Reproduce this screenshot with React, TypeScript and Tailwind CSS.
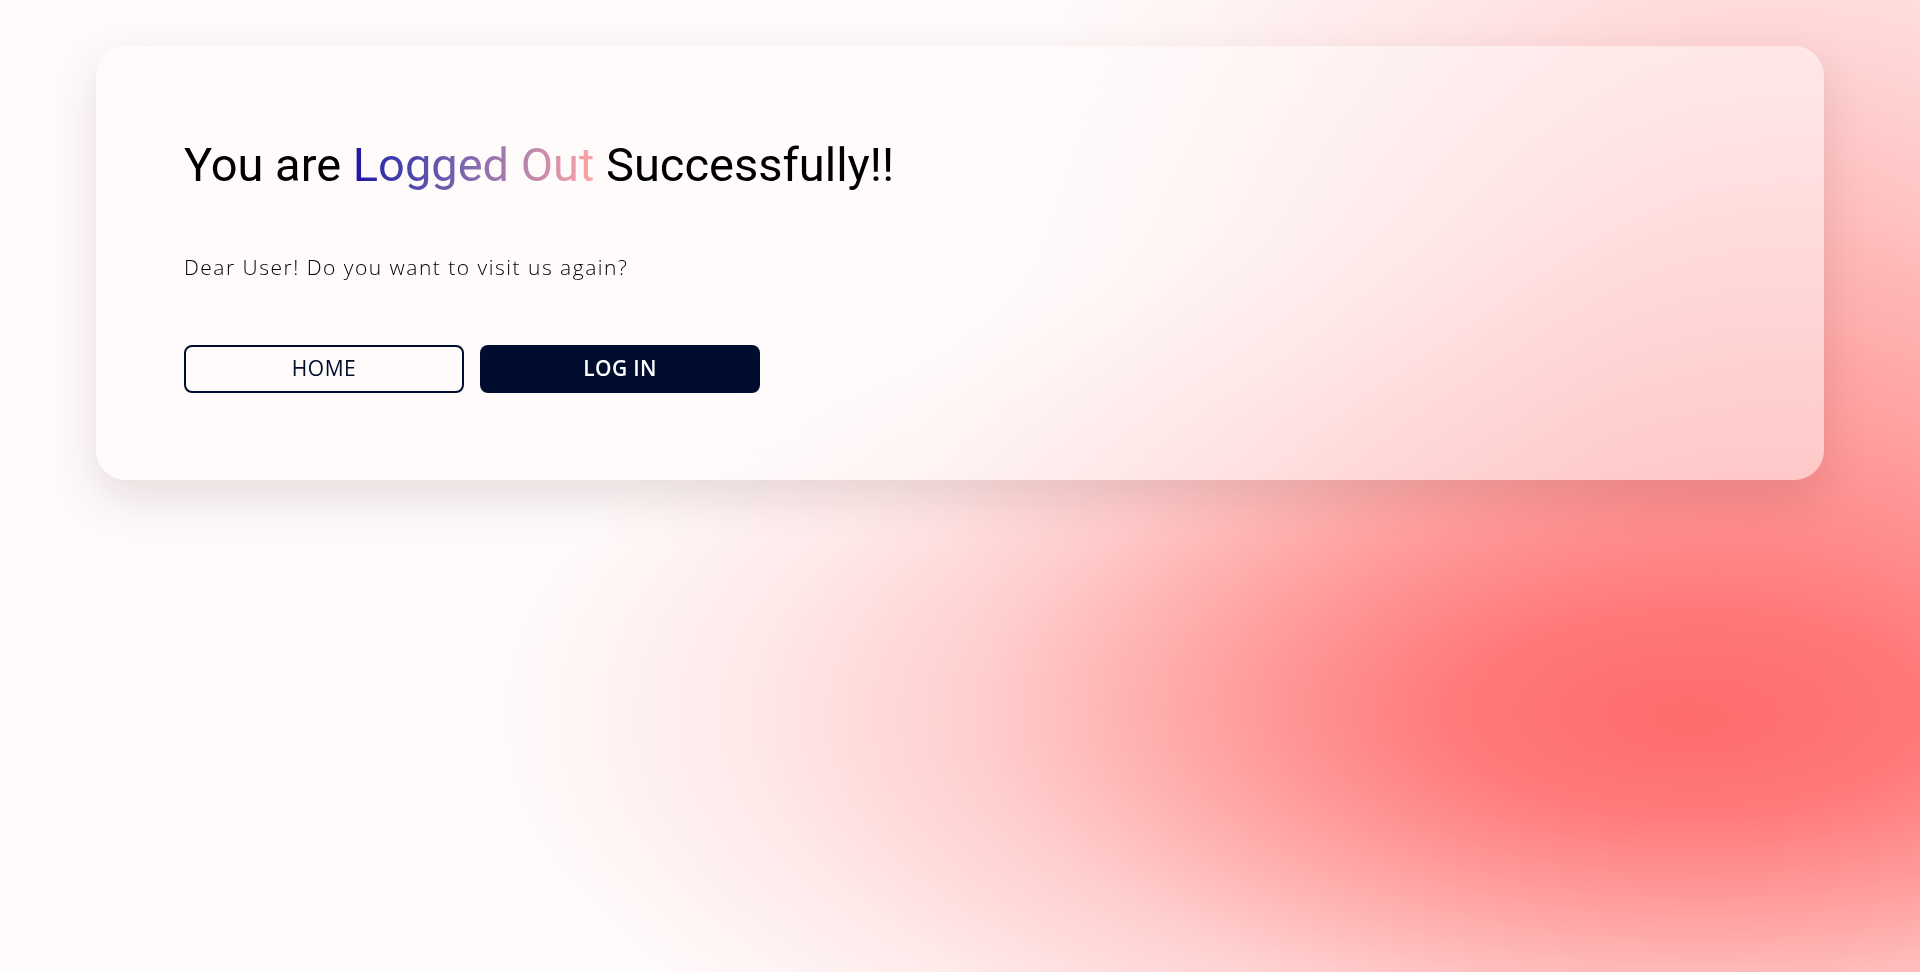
import React from "react";

export default function App() {
  return (
    <div className="min-h-[972px] w-full bg-[#fffafa] bg-[radial-gradient(ellipse_1200px_500px_at_1690px_716px,rgba(255,107,107,1)_0%,rgba(255,107,107,0.87)_20%,rgba(255,107,107,0.58)_40%,rgba(255,107,107,0.3)_60%,rgba(255,107,107,0.11)_80%,rgba(255,107,107,0.04)_92%,rgba(255,107,107,0)_100%),radial-gradient(ellipse_850px_750px_at_1780px_380px,rgba(255,107,107,0.5)_0%,rgba(255,107,107,0.44)_20%,rgba(255,107,107,0.29)_40%,rgba(255,107,107,0.15)_60%,rgba(255,107,107,0.055)_80%,rgba(255,107,107,0.02)_92%,rgba(255,107,107,0)_100%)] pt-[46px] overflow-hidden">
      <div className="mx-auto w-[1728px] h-[434px] rounded-[30px] bg-[rgba(255,252,252,0.5)] backdrop-blur-[30px] shadow-[0_18px_45px_rgba(60,20,20,0.12)] pl-[88px] pt-[95px]">
        <h1 className="text-[47px] leading-none text-black font-normal [font-family:Roboto,'Liberation_Sans',sans-serif]">
          You are{" "}
          <span className="bg-gradient-to-r from-[#220ca6] to-[#ffa4a4] bg-clip-text text-transparent">
            Logged Out
          </span>{" "}
          Successfully!!
        </h1>
        <p className="mt-[65px] text-[21px] leading-[28px] font-light text-black [font-family:'Open_Sans','Noto_Sans',sans-serif] tracking-[1.5px]">
          Dear User! Do you want to visit us again?
        </p>
        <div className="mt-[64px] flex gap-[16px] [font-family:'Open_Sans','Noto_Sans',sans-serif]">
          <button className="w-[280px] h-[48px] rounded-[8px] border-2 border-[#000d2e] text-[#000d2e] text-[21px] tracking-[0.5px] font-normal flex items-center justify-center">
            HOME
          </button>
          <button className="w-[280px] h-[48px] rounded-[8px] bg-[#000d2e] text-white text-[21px] tracking-[0.3px] font-semibold flex items-center justify-center">
            LOG IN
          </button>
        </div>
      </div>
    </div>
  );
}
